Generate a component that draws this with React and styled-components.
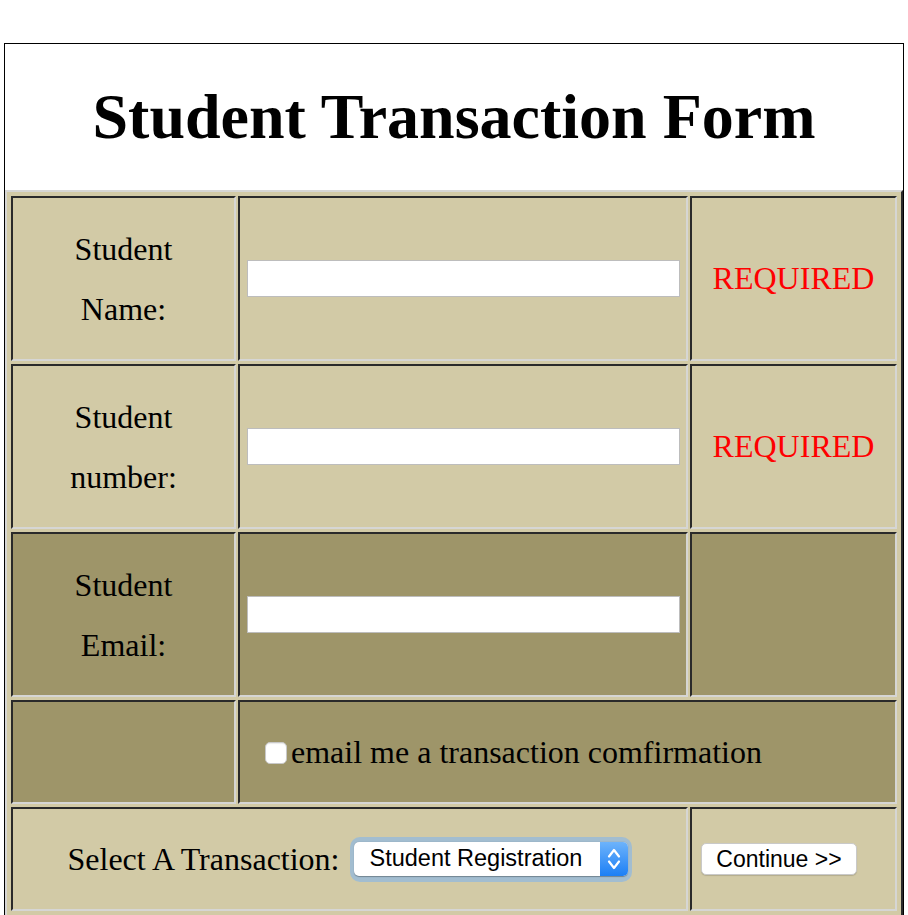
import React, { useState } from "react";
import styled, { createGlobalStyle } from "styled-components";

const GlobalStyle = createGlobalStyle`
  body {
    margin: 0;
    background: #fff;
    font-family: "Liberation Serif", "Times New Roman", serif;
  }
`;

const DARK = "#2a2a2a";
const LIGHT = "#d6d6d4";

const App = () => {
  const [confirm, setConfirm] = useState(false);
  const [transaction, setTransaction] = useState("Student Registration");

  return (
    <>
      <GlobalStyle />
      <Page>
        <TitleBar>
          <Title>Student Transaction Form</Title>
        </TitleBar>
        <FormGrid>
          <Cell>
            <Label>
              Student
              <br />
              Name:
            </Label>
          </Cell>
          <Cell $pad>
            <TextInput type="text" />
          </Cell>
          <Cell>
            <Required>REQUIRED</Required>
          </Cell>

          <Cell>
            <Label>
              Student
              <br />
              number:
            </Label>
          </Cell>
          <Cell $pad>
            <TextInput type="text" />
          </Cell>
          <Cell>
            <Required>REQUIRED</Required>
          </Cell>

          <Cell $dark>
            <Label>
              Student
              <br />
              Email:
            </Label>
          </Cell>
          <Cell $dark $pad>
            <TextInput type="email" />
          </Cell>
          <Cell $dark />

          <Cell $dark />
          <Cell $dark $span={2} $justify="flex-start">
            <CheckRow>
              <CheckBox
                type="checkbox"
                checked={confirm}
                onChange={(e) => setConfirm(e.target.checked)}
              />
              email me a transaction comfirmation
            </CheckRow>
          </Cell>

          <Cell $span={2}>
            <SelectRow>
              Select A Transaction:
              <SelectRing>
                <SelectBox>
                  <SelectValue>{transaction}</SelectValue>
                  <SelectArrow>
                    <svg width="14" height="24" viewBox="0 0 14 24">
                      <path
                        d="M2 9.5 L7 3 L12 9.5 M2 14.5 L7 21 L12 14.5"
                        fill="none"
                        stroke="#fff"
                        strokeWidth="2.2"
                        strokeLinecap="round"
                        strokeLinejoin="round"
                      />
                    </svg>
                  </SelectArrow>
                  <HiddenSelect
                    value={transaction}
                    onChange={(e) => setTransaction(e.target.value)}
                  >
                    <option>Student Registration</option>
                    <option>Course Withdrawal</option>
                    <option>Transcript Request</option>
                  </HiddenSelect>
                </SelectBox>
              </SelectRing>
            </SelectRow>
          </Cell>
          <Cell $justify="flex-start">
            <ContinueButton type="button">Continue &gt;&gt;</ContinueButton>
          </Cell>
        </FormGrid>
      </Page>
    </>
  );
};

const Page = styled.div`
  margin: 43px 4px 0;
  border: 1px solid #000;
`;

const TitleBar = styled.div`
  height: 146px;
  display: flex;
  align-items: center;
  justify-content: center;
`;

const Title = styled.h1`
  margin: 0;
  font-size: 64px;
  font-weight: bold;
  color: #000;
`;

const FormGrid = styled.div`
  display: grid;
  grid-template-columns: 225px 450px 1fr;
  grid-template-rows: 165px 165px 165px 104px 104px;
  gap: 3px 2px;
  padding: 4px;
  background: #d2caa6;
  border: 2px solid;
  border-color: ${LIGHT} ${DARK} ${DARK} ${LIGHT};
`;

const Cell = styled.div`
  grid-column: span ${(p) => p.$span || 1};
  display: flex;
  align-items: center;
  justify-content: ${(p) => p.$justify || "center"};
  padding: ${(p) => (p.$pad ? "0 6px 0 7px" : "0")};
  background: ${(p) => (p.$dark ? "#9e9569" : "#d2caa6")};
  border: 2px solid;
  border-color: ${DARK} ${LIGHT} ${LIGHT} ${DARK};
  min-width: 0;
`;

const Label = styled.div`
  font-size: 32px;
  line-height: 60px;
  text-align: center;
  color: #000;
`;

const Required = styled.span`
  font-size: 32px;
  color: #ff0000;
`;

const TextInput = styled.input`
  width: 100%;
  height: 37px;
  box-sizing: border-box;
  border: 1px solid #bdbdbd;
  background: #fff;
  outline: none;
  font-size: 20px;
`;

const CheckRow = styled.label`
  display: flex;
  align-items: center;
  padding-left: 25px;
  font-size: 32px;
  color: #000;
`;

const CheckBox = styled.input`
  appearance: none;
  width: 22px;
  height: 22px;
  margin: 2px 4px 0 0;
  border-radius: 5px;
  background: #fff;
  border: 1px solid #c8c8c8;
  box-shadow: inset 0 1px 1px rgba(0, 0, 0, 0.08);
`;

const SelectRow = styled.div`
  display: flex;
  align-items: center;
  gap: 10px;
  font-size: 32px;
  color: #000;
`;

const SelectRing = styled.div`
  padding: 5px 4px 6px 4px;
  border-radius: 10px;
  background: #a2bdd0;
`;

const SelectBox = styled.div`
  position: relative;
  display: flex;
  width: 274px;
  height: 34px;
  border-radius: 5px;
  background: #fff;
  overflow: hidden;
  box-shadow: 0 0.5px 1px rgba(0, 0, 0, 0.3);
`;

const SelectValue = styled.span`
  flex: 1;
  display: flex;
  align-items: center;
  padding-left: 16px;
  font-family: "Liberation Sans", Arial, sans-serif;
  font-size: 23.5px;
  color: #000;
`;

const SelectArrow = styled.span`
  width: 28px;
  display: flex;
  align-items: center;
  justify-content: center;
  background: linear-gradient(#6db3fb, #1c7ff5);
`;

const HiddenSelect = styled.select`
  position: absolute;
  inset: 0;
  opacity: 0;
  cursor: pointer;
`;

const ContinueButton = styled.button`
  margin-left: 9px;
  width: 156px;
  height: 32px;
  border: 1px solid #c9c9c9;
  border-radius: 5px;
  background: #fff;
  box-shadow: 0 1px 1px rgba(0, 0, 0, 0.15);
  font-family: "Liberation Sans", Arial, sans-serif;
  font-size: 23px;
  color: #000;
  padding: 0;
`;

export default App;
